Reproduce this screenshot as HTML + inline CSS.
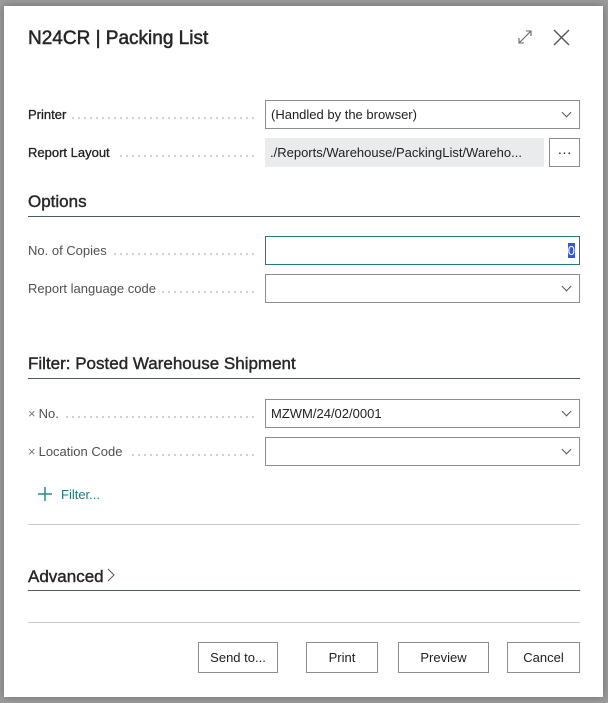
<!DOCTYPE html>
<html><head><style>
*{box-sizing:border-box;margin:0;padding:0}
body{width:608px;height:703px;background:#9c9c9c;font-family:"Liberation Sans",sans-serif;position:relative;overflow:hidden;color:#212121}
.dlg{position:absolute;left:4px;top:6px;width:599px;height:691px;background:#fff;box-shadow:0 0 8px rgba(0,0,0,.3)}
.a{position:absolute}
.t{font-size:19px;left:28px;top:28px;color:#262626;-webkit-text-stroke:0.5px #262626}
.lbl{position:absolute;left:28px;width:228px;font-size:13px;height:18px;overflow:hidden;white-space:nowrap;color:#505050}
.lbl>span{background:#fff;padding-right:6px;position:relative;z-index:1}
.lbl:after{content:"";position:absolute;left:0;right:0;top:10px;height:2px;background:radial-gradient(circle,#c4c4c4 0.8px,transparent 1.1px) 0 0/6px 2px repeat-x}
.x{color:#777;margin-right:3px}
.b{color:#212121;-webkit-text-stroke:0.3px #212121}
.inp{position:absolute;left:265px;width:315px;height:29px;border:1px solid #8a8d92;font-size:13px;padding:6px 5px;color:#212121}
.chev{position:absolute;right:9px;top:8px;width:7px;height:7px;border-right:1px solid #555;border-bottom:1px solid #555;transform:rotate(45deg)}
.h{position:absolute;left:28px;width:552px;font-size:17px;color:#262626;-webkit-text-stroke:0.4px #262626;border-bottom:1px solid #505860;padding-bottom:4px}
.line{position:absolute;left:28px;width:552px;border-top:1px solid #c8c8c8}
.btn{position:absolute;top:642px;height:31px;border:1px solid #8a8d92;font-size:13px;text-align:center;line-height:29px;color:#212121;background:#fff}
</style></head><body>
<div class="dlg"></div>
<div class="a t">N24CR | Packing List</div>
<svg class="a" style="left:516px;top:28px" width="18" height="18" viewBox="0 0 18 18" fill="none" stroke="#666" stroke-width="1.1"><path d="M3 15L15 3M10 3h5v5M3 10v5h5"/></svg>
<svg class="a" style="left:553px;top:29px" width="17" height="17" viewBox="0 0 17 17" fill="none" stroke="#555" stroke-width="1.4"><path d="M1 1L16 16M16 1L1 16"/></svg>

<div class="lbl" style="top:107px"><span class="b">Printer</span></div>
<div class="inp" style="top:100px">(Handled by the browser)<div class="chev"></div></div>
<div class="lbl" style="top:145px"><span class="b">Report Layout</span></div>
<div class="inp" style="top:138px;width:279px;border:none;background:#eaebec;padding-top:7px">./Reports/Warehouse/PackingList/Wareho...</div>
<div class="inp" style="top:138px;left:549px;width:31px;text-align:center;padding:0;line-height:27px;font-size:14px">&middot;&middot;&middot;</div>

<div class="h" style="top:192px">Options</div>
<div class="lbl" style="top:243px"><span>No. of Copies</span></div>
<div class="inp" style="top:236px;border-color:#1f7b7b;text-align:right;padding-right:4px"><span style="background:#3a56d4;color:#fff">0</span></div>
<div class="lbl" style="top:281px"><span>Report language code</span></div>
<div class="inp" style="top:274px"><div class="chev"></div></div>

<div class="h" style="top:354px">Filter: Posted Warehouse Shipment</div>
<div class="lbl" style="top:406px"><span><i class="x" style="font-style:normal">×</i>No.</span></div>
<div class="inp" style="top:399px">MZWM/24/02/0001<div class="chev"></div></div>
<div class="lbl" style="top:444px"><span><i class="x" style="font-style:normal">×</i>Location Code</span></div>
<div class="inp" style="top:437px"><div class="chev"></div></div>
<svg class="a" style="left:37px;top:486px" width="16" height="16" viewBox="0 0 16 16" stroke="#2a8a8a" stroke-width="1.5"><path d="M8 1v14M1 8h14"/></svg>
<div class="a" style="left:61px;top:487px;font-size:13px;color:#1f7b7b">Filter...</div>
<div class="line" style="top:524px"></div>

<div class="h" style="top:567px;padding-bottom:3px">Advanced<svg width="10" height="14" viewBox="0 0 10 14" fill="none" stroke="#555" stroke-width="1" style="margin-left:2px"><path d="M2 1l6 6-6 6"/></svg></div>
<div class="line" style="top:622px"></div>

<div class="btn" style="left:198px;width:80px">Send to...</div>
<div class="btn" style="left:306px;width:72px">Print</div>
<div class="btn" style="left:398px;width:91px">Preview</div>
<div class="btn" style="left:507px;width:73px">Cancel</div>
</body></html>
